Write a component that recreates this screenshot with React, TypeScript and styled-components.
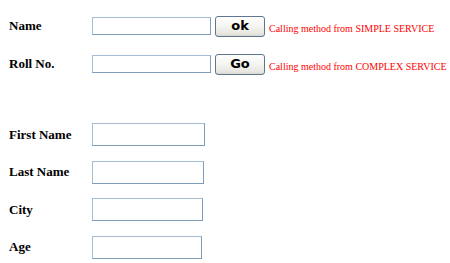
import React from "react";
import styled, { createGlobalStyle } from "styled-components";

const GlobalStyle = createGlobalStyle`
  body {
    margin: 0;
    background: #ffffff;
    font-family: "Liberation Serif", "Times New Roman", serif;
  }
`;

const Page = styled.div`
  padding: 7px 0 0 9px;
  display: flex;
  flex-direction: column;
`;

const Section = styled.div<{ $rowHeight: number }>`
  display: grid;
  grid-template-columns: 83px auto;
  grid-auto-rows: ${(p) => p.$rowHeight}px;
  align-items: center;
`;

const Spacer = styled.div`
  height: 33px;
`;

const Label = styled.div`
  font-size: 13px;
  font-weight: bold;
  color: #000;
`;

const Controls = styled.div`
  display: flex;
  align-items: center;
`;

const TextBox = styled.input<{ $w: number; $h: number }>`
  box-sizing: border-box;
  width: ${(p) => p.$w}px;
  height: ${(p) => p.$h}px;
  margin: 0;
  padding: 1px 2px;
  border: 1px solid #7f9db9;
  border-left-color: #a5bcd5;
  border-top-color: #a5bcd5;
  background: #fff;
  outline: none;
`;

const Button = styled.button`
  box-sizing: border-box;
  width: 50px;
  height: 21px;
  margin: 0 4px 0 4px;
  padding: 0 0 1px;
  border: 1px solid #5f7590;
  border-radius: 3px;
  background: linear-gradient(#fefefe 0%, #f4f4f0 50%, #e6e5df 90%, #d6d4cc 100%);
  font-family: "DejaVu Sans", Verdana, sans-serif;
  font-weight: bold;
  font-size: 13px;
  color: #000;
  line-height: 18px;
`;

const Note = styled.span`
  font-size: 10px;
  color: #ff0000;
  margin-top: 5px;
  white-space: nowrap;
`;

type ServiceRow = { label: string; button: string; note: string };

const serviceRows: ServiceRow[] = [
  { label: "Name", button: "ok", note: "Calling method from SIMPLE SERVICE" },
  { label: "Roll No.", button: "Go", note: "Calling method from COMPLEX SERVICE" },
];

const personRows: { label: string; width: number }[] = [
  { label: "First Name", width: 113 },
  { label: "Last Name", width: 112 },
  { label: "City", width: 111 },
  { label: "Age", width: 110 },
];

export default function App() {
  return (
    <Page>
      <GlobalStyle />
      <Section $rowHeight={38}>
        {serviceRows.map((r) => (
          <React.Fragment key={r.label}>
            <Label>{r.label}</Label>
            <Controls>
              <TextBox type="text" $w={119} $h={18} />
              <Button>{r.button}</Button>
              <Note>{r.note}</Note>
            </Controls>
          </React.Fragment>
        ))}
      </Section>
      <Spacer />
      <Section $rowHeight={37.5}>
        {personRows.map((r) => (
          <React.Fragment key={r.label}>
            <Label>{r.label}</Label>
            <Controls>
              <TextBox type="text" $w={r.width} $h={23} />
            </Controls>
          </React.Fragment>
        ))}
      </Section>
    </Page>
  );
}
